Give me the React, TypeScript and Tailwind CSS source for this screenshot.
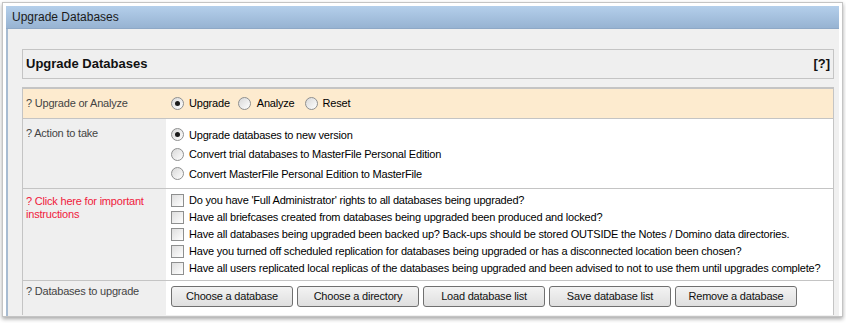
import React from 'react';

const Radio = ({ checked }: { checked?: boolean }) => (
  <span className="flex h-[13px] w-[13px] shrink-0 items-center justify-center rounded-full border border-[#8e8f8f] bg-gradient-to-br from-[#d8d8d8] to-white">
    {checked && <span className="h-[5px] w-[5px] rounded-full bg-[#1a1a1a]" />}
  </span>
);

const Check = () => (
  <span className="block h-[13px] w-[13px] shrink-0 border border-[#8e8f8f] bg-gradient-to-br from-[#dedede] to-white" />
);

const questions = [
  "Do you have 'Full Administrator' rights to all databases being upgraded?",
  'Have all briefcases created from databases being upgraded been produced and locked?',
  'Have all databases being upgraded been backed up? Back-ups should be stored OUTSIDE the Notes / Domino data directories.',
  'Have you turned off scheduled replication for databases being upgraded or has a disconnected location been chosen?',
  'Have all users replicated local replicas of the databases being upgraded and been advised to not to use them until upgrades complete?',
];

const buttons = ['Choose a database', 'Choose a directory', 'Load database list', 'Save database list', 'Remove a database'];

export default function App() {
  return (
    <div className="h-[323px] w-[846px] overflow-hidden bg-white pl-[2px] pt-[2px] font-['Liberation_Sans',Arial,sans-serif] text-[11px] tracking-[-0.2px] text-black">
      {/* window */}
      <div className="flex h-[315px] w-[841px] flex-col border border-[#c4c4c4] bg-white px-[3px] pt-[3px] shadow-[0_2px_4px_rgba(0,0,0,0.35)]">
        {/* title bar */}
        <div className="flex h-[23px] shrink-0 items-center border-b border-[#8ea8c6] bg-gradient-to-b from-[#b4cfeb] to-[#97b3d2] pl-[6px] text-[12px] tracking-normal text-[#1b1b1b]">
          Upgrade Databases
        </div>

        {/* content */}
        <div className="flex-1 overflow-hidden border-l-2 border-[#a7bbd1] bg-[#f0f0f0] pl-[14px] pr-[5px] pt-[20px]">
          {/* header box */}
          <div className="flex h-[30px] items-center justify-between border border-[#c4c4c4] bg-[#efefef] px-[3px] text-[13px] font-bold tracking-normal text-[#111]">
            <span>Upgrade Databases</span>
            <span>[?]</span>
          </div>

          {/* form table */}
          <div className="mt-[8px] border-x border-t-2 border-[#c4c4c4]">
            {/* row 1 */}
            <div className="flex h-[30px] border-b border-[#c4c4c4] bg-[#fdebcf]">
              <div className="flex w-[143px] shrink-0 items-center pl-[3px] text-[#444]">? Upgrade or Analyze</div>
              <div className="flex items-center pl-[5px]">
                <Radio checked />
                <span className="ml-[5px]">Upgrade</span>
                <span className="ml-[8px]"><Radio /></span>
                <span className="ml-[6px]">Analyze</span>
                <span className="ml-[10px]"><Radio /></span>
                <span className="ml-[5px]">Reset</span>
              </div>
            </div>

            {/* row 2 */}
            <div className="flex border-b border-[#c4c4c4]">
              <div className="w-[143px] shrink-0 bg-[#efefef] pl-[3px] pt-[8px] leading-[13px] text-[#444]">? Action to take</div>
              <div className="flex-1 bg-white pb-[4px] pl-[5px] pt-[6px]">
                {['Upgrade databases to new version', 'Convert trial databases to MasterFile Personal Edition', 'Convert MasterFile Personal Edition to MasterFile'].map(
                  (t, i) => (
                    <div key={t} className="flex h-[19.5px] items-center">
                      <Radio checked={i === 0} />
                      <span className="ml-[5px]">{t}</span>
                    </div>
                  ),
                )}
              </div>
            </div>

            {/* row 3 */}
            <div className="flex border-b border-[#c4c4c4]">
              <div className="w-[143px] shrink-0 bg-[#efefef] pl-[3px] pr-[2px] pt-[6px] leading-[13px] text-[#f0203c]">
                ? Click here for important instructions
              </div>
              <div className="min-w-0 flex-1 bg-white pb-[3px] pl-[5px] pt-[3px]">
                {questions.map((q) => (
                  <div key={q} className="flex h-[17px] items-center">
                    <Check />
                    <span className="ml-[5px] whitespace-nowrap">{q}</span>
                  </div>
                ))}
              </div>
            </div>

            {/* row 4 */}
            <div className="flex">
              <div className="w-[143px] shrink-0 bg-[#efefef] pl-[3px] pt-[4px] leading-[13px] text-[#444]">? Databases to upgrade</div>
              <div className="flex flex-1 gap-[4px] bg-white pb-[8px] pl-[5px] pt-[5px]">
                {buttons.map((b) => (
                  <div
                    key={b}
                    className="flex h-[21px] w-[122px] items-center justify-center rounded-[3px] border border-[#707070] bg-gradient-to-b from-[#f3f3f3] to-[#dfdfdf] text-[#111]"
                  >
                    {b}
                  </div>
                ))}
              </div>
            </div>
          </div>
        </div>
      </div>
    </div>
  );
}
